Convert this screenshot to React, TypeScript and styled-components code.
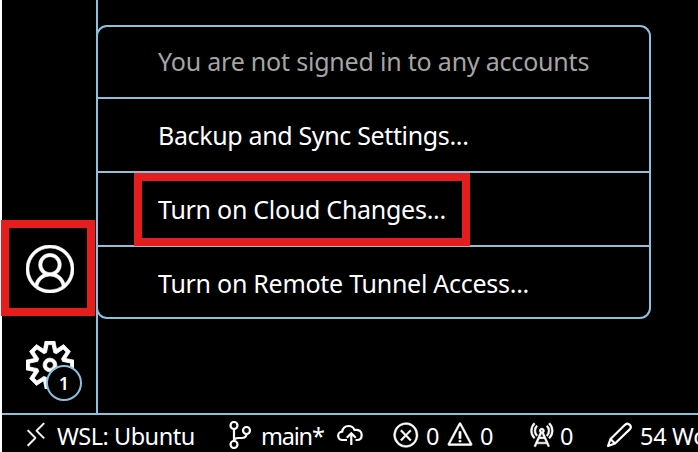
import React from "react";
import styled, { createGlobalStyle } from "styled-components";
import {
  VscAccount, VscSettingsGear, VscRemote,
  VscError, VscWarning, VscRadioTower,
} from "react-icons/vsc";

const line = "#8cc0dd";
const red = "#e51d1d";

const GlobalStyle = createGlobalStyle`
  * { box-sizing: border-box; }
  body { margin: 0; background: #fff; overflow: hidden; }
`;

const Window = styled.div`
  width: 698px;
  height: 452px;
  padding-left: 2px;
  display: flex;
  flex-direction: column;
  overflow: hidden;
  color: #fff;
  font-family: "Noto Sans", "Open Sans", sans-serif;
`;

const Workbench = styled.div`
  flex: 1;
  display: flex;
  background: #000;
  position: relative;
`;

const ActivityBar = styled.nav`
  width: 96px;
  border-right: 2px solid ${line};
  display: flex;
  flex-direction: column;
  justify-content: flex-end;
  align-items: flex-start;
`;

const Action = styled.div<{ $weight: number }>`
  position: relative;
  width: 96px;
  height: 96px;
  display: flex;
  align-items: center;
  justify-content: center;
  svg path { stroke: currentColor; stroke-width: ${(p) => p.$weight}px; }
`;

const Badge = styled.span`
  position: absolute;
  left: 44px;
  top: 48px;
  width: 36px;
  height: 36px;
  border: 2px solid ${line};
  border-radius: 50%;
  background: #000;
  font-size: 18px;
  font-weight: 600;
  line-height: 33px;
  text-align: center;
`;

const ActionHighlight = styled.div`
  position: absolute;
  left: -1px;
  top: -1px;
  width: 94px;
  height: 96px;
  border: 8px solid ${red};
`;

const Menu = styled.ul`
  position: absolute;
  left: 94px;
  top: 25px;
  width: 555px;
  height: 294px;
  margin: 0;
  padding: 0;
  list-style: none;
  border: 2px solid ${line};
  border-radius: 11px;
`;

const MenuItem = styled.li<{ $muted?: boolean; $spacing: number }>`
  position: relative;
  height: 74px;
  padding-left: 60px;
  font-size: 25px;
  line-height: 72px;
  white-space: nowrap;
  letter-spacing: ${(p) => p.$spacing}px;
  color: ${(p) => (p.$muted ? "#a5a5a5" : "#fff")};
  border-bottom: 2px solid ${line};
  &:first-child { height: 72px; line-height: 69px; }
  &:last-child { border-bottom: 0; }
`;

const ItemHighlight = styled.div`
  position: absolute;
  left: 36px;
  top: 0;
  width: 336px;
  height: 73px;
  border: 8px solid ${red};
  z-index: 1;
`;

const StatusBar = styled.footer`
  height: 39px;
  padding: 3px 0 0 20px;
  display: flex;
  align-items: center;
  background: #000;
  border-top: 2px solid ${line};
  font-size: 23.5px;
  white-space: nowrap;
`;

const StatusItem = styled.div<{ $width: number }>`
  flex: none;
  width: ${(p) => p.$width}px;
  height: 28px;
  display: flex;
  align-items: center;
  svg { flex: none; }
  svg[stroke-width="0"] path { stroke: currentColor; stroke-width: 0.3px; }
`;

const Label = styled.span<{ $gap?: number; $spacing?: number }>`
  margin-left: ${(p) => p.$gap ?? 7}px;
  padding-top: 2px;
  letter-spacing: ${(p) => p.$spacing ?? 0}px;
`;

const BranchIcon = () => (
  <svg width="28" height="28" viewBox="0 0 28 28" fill="none" stroke="currentColor" strokeWidth="2.2">
    <circle cx="7" cy="4.5" r="3.5" />
    <circle cx="7" cy="23.5" r="3.5" />
    <circle cx="19.5" cy="9.5" r="3.5" />
    <path d="M7 8v12M19.5 13c0 3-2 4-5 4h-3c-3 0-4.5 1-4.5 3" />
  </svg>
);

const CloudUploadIcon = () => (
  <svg width="28" height="28" viewBox="0 0 28 28" fill="none" stroke="currentColor" strokeWidth="2.2">
    <path d="M12 19H7.5A4.2 4.2 0 0 1 7.2 10.600C7.8 7 10.3 5 13.5 5C16.4 5 18.6 6.5 19.5 9C24 8.2 26.7 10.7 26.7 14C26.7 17 24.8 19 22 19H20.5" />
    <path d="M16.3 24V12.5M11.8 16.7L16.3 12.2L20.8 16.7" />
  </svg>
);

const PencilIcon = () => (
  <svg width="28" height="28" viewBox="0 0 28 28" fill="none" stroke="currentColor" strokeWidth="2.2" strokeLinejoin="round">
    <path d="M3 25L5.5 18L20 3.8C21.5 2.5 23.5 2.6 24.8 3.9C26 5.1 26 7 24.7 8.4L10 22.5Z" />
    <path d="M5.5 18L10 22.5" />
  </svg>
);

export default function App() {
  return (
    <>
      <GlobalStyle />
      <Window>
        <Workbench>
          <ActivityBar>
            <Action $weight={0.2}>
              <VscAccount size={48} />
              <ActionHighlight />
            </Action>
            <Action $weight={0.4}>
              <VscSettingsGear size={48} />
              <Badge>1</Badge>
            </Action>
          </ActivityBar>
          <Menu>
            <MenuItem $muted $spacing={-0.2}>You are not signed in to any accounts</MenuItem>
            <MenuItem $spacing={-0.35}>Backup and Sync Settings...</MenuItem>
            <MenuItem $spacing={-0.27}>
              Turn on Cloud Changes...
              <ItemHighlight />
            </MenuItem>
            <MenuItem $spacing={-0.27}>Turn on Remote Tunnel Access...</MenuItem>
          </Menu>
        </Workbench>
        <StatusBar>
          <StatusItem $width={205}><VscRemote size={28} /><Label $spacing={-0.5}>WSL: Ubuntu</Label></StatusItem>
          <StatusItem $width={108}><BranchIcon /><Label $gap={6} $spacing={-1.2}>main*</Label></StatusItem>
          <StatusItem $width={57}><CloudUploadIcon /></StatusItem>
          <StatusItem $width={54}><VscError size={28} /><Label $gap={6}>0</Label></StatusItem>
          <StatusItem $width={81}><VscWarning size={28} /><Label $gap={6}>0</Label></StatusItem>
          <StatusItem $width={78}><VscRadioTower size={28} /><Label $gap={5}>0</Label></StatusItem>
          <StatusItem $width={120}><PencilIcon /><Label $spacing={-0.3}>54 Words</Label></StatusItem>
        </StatusBar>
      </Window>
    </>
  );
}
